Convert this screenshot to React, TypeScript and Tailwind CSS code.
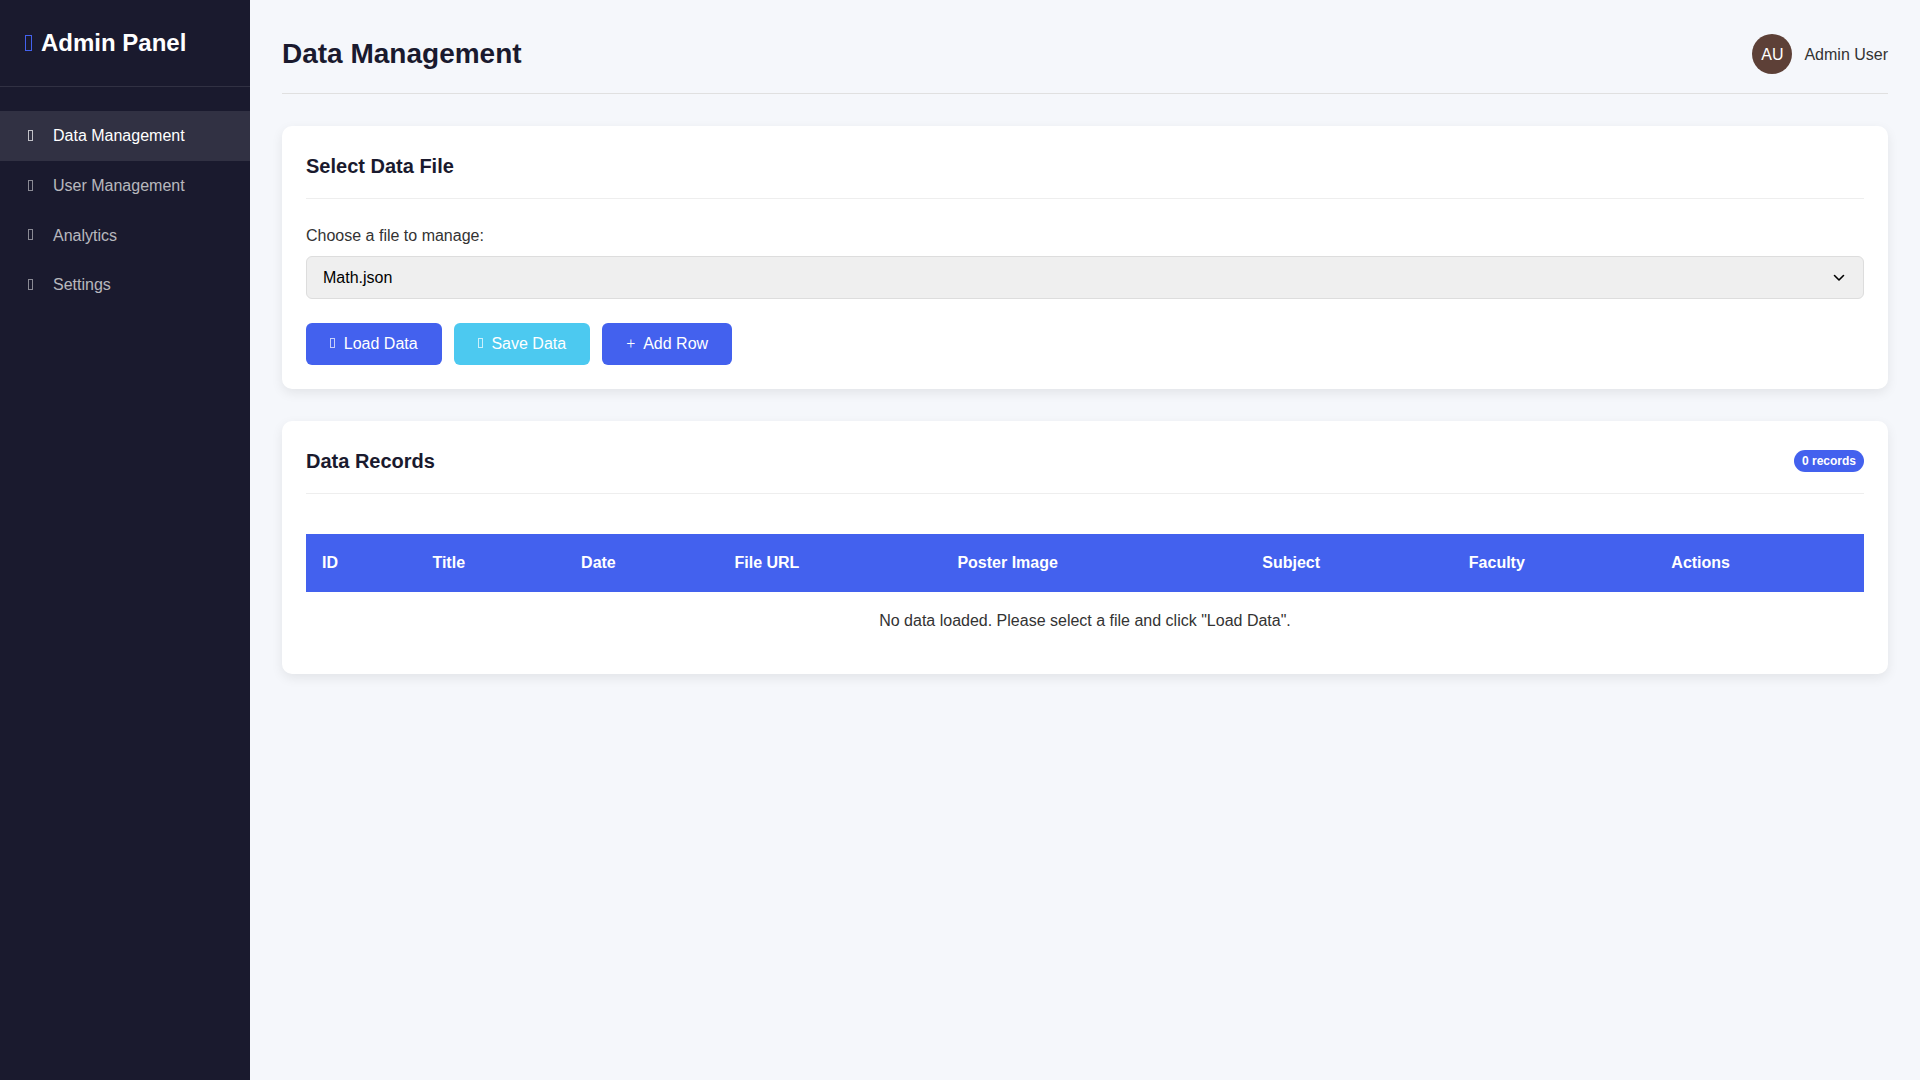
const nav = [
  { label: "Data Management", active: true },
  { label: "User Management", active: false },
  { label: "Analytics", active: false },
  { label: "Settings", active: false },
];
const cols = ["ID", "Title", "Date", "File URL", "Poster Image", "Subject", "Faculty", "Actions"];
const btn = "px-6 py-2 rounded-md text-white flex items-center";
const btnBox = "inline-block w-[5px] h-[10px] border border-white opacity-70 mr-[8.8px] mb-[2px]";
export default function App() {
  return (
    <div className="flex min-h-screen bg-[#f5f7fb] font-['Liberation_Sans',sans-serif] text-[#333333] text-base leading-[1.6]">
      <aside className="w-[250px] shrink-0 bg-[#1a1a2e] text-white">
        <div className="p-6 border-b border-white/10">
          <h1 className="text-2xl leading-[1.6] font-bold flex items-center">
            <span className="inline-block w-[7px] h-[16px] border border-[#4361ee] ml-[1px] mr-[9px]" />Admin Panel
          </h1>
        </div>
        <nav className="pt-6">
          {nav.map((n) => (
            <div key={n.label} className={`flex items-center px-[25px] py-3 ${n.active ? "bg-white/10 text-white" : "text-white/70"}`}>
              <span className="w-[28px] flex items-center">
                <span className="inline-block w-[5px] h-[11px] border border-current opacity-70 ml-[3px] mb-[1px]" />
              </span>
              <span>{n.label}</span>
            </div>
          ))}
        </nav>
      </aside>
      <main className="flex-1 min-w-0 px-8 pt-8">
        <header className="flex items-center justify-between border-b border-[#e0e0e0] pb-4 mb-8">
          <h2 className="text-[28px] leading-[1.6] font-bold text-[#1a1a2e]">Data Management</h2>
          <div className="flex items-center gap-3">
            <div className="w-10 h-10 rounded-full bg-[#5d4037] text-white flex items-center justify-center">AU</div>
            <span>Admin User</span>
          </div>
        </header>
        <section className="bg-white rounded-[10px] shadow-[0_4px_12px_rgba(0,0,0,0.08)] p-6 mb-8">
          <div className="border-b border-[#eeeeee] pb-4 mb-6">
            <h3 className="text-xl leading-[1.6] font-bold text-[#1a1a2e]">Select Data File</h3>
          </div>
          <label htmlFor="file" className="block mb-2">Choose a file to manage:</label>
          <div className="relative">
            <select id="file" defaultValue="Math.json" className="block w-full h-[43px] rounded-md border border-[#dddddd] bg-[#efefef] text-black pl-4 pr-10 appearance-none">
              <option>Math.json</option>
            </select>
            <svg className="absolute right-[19px] top-[18px] text-black pointer-events-none" width="12" height="8" viewBox="0 0 12 8" fill="none" stroke="currentColor" strokeWidth="1.6" strokeLinecap="round" strokeLinejoin="round">
              <path d="M1.5 1.5 6 6l4.5-4.5" />
            </svg>
          </div>
          <div className="flex gap-3 mt-6">
            <button className={`${btn} bg-[#4361ee]`}><span className={btnBox} />Load Data</button>
            <button className={`${btn} bg-[#4cc9f0]`}><span className={btnBox} />Save Data</button>
            <button className={`${btn} bg-[#4361ee]`}><span className="font-['Liberation_Serif',serif] mr-2">+</span>Add Row</button>
          </div>
        </section>
        <section className="bg-white rounded-[10px] shadow-[0_4px_12px_rgba(0,0,0,0.08)] p-6">
          <div className="border-b border-[#eeeeee] pb-4 mb-10 flex items-center justify-between">
            <h3 className="text-xl leading-[1.6] font-bold text-[#1a1a2e]">Data Records</h3>
            <span className="rounded-full bg-[#4361ee] text-white text-xs leading-[1.6] font-bold px-2 pt-[2px] pb-[1px]">0 records</span>
          </div>
          <table className="w-full">
            <thead>
              <tr className="bg-[#4361ee] text-white">
                {cols.map((c) => (
                  <th key={c} className="p-4 text-left font-bold">{c}</th>
                ))}
              </tr>
            </thead>
            <tbody>
              <tr>
                <td colSpan={8} className="p-4 text-center border-b border-white">No data loaded. Please select a file and click "Load Data".</td>
              </tr>
            </tbody>
          </table>
        </section>
      </main>
    </div>
  );
}
